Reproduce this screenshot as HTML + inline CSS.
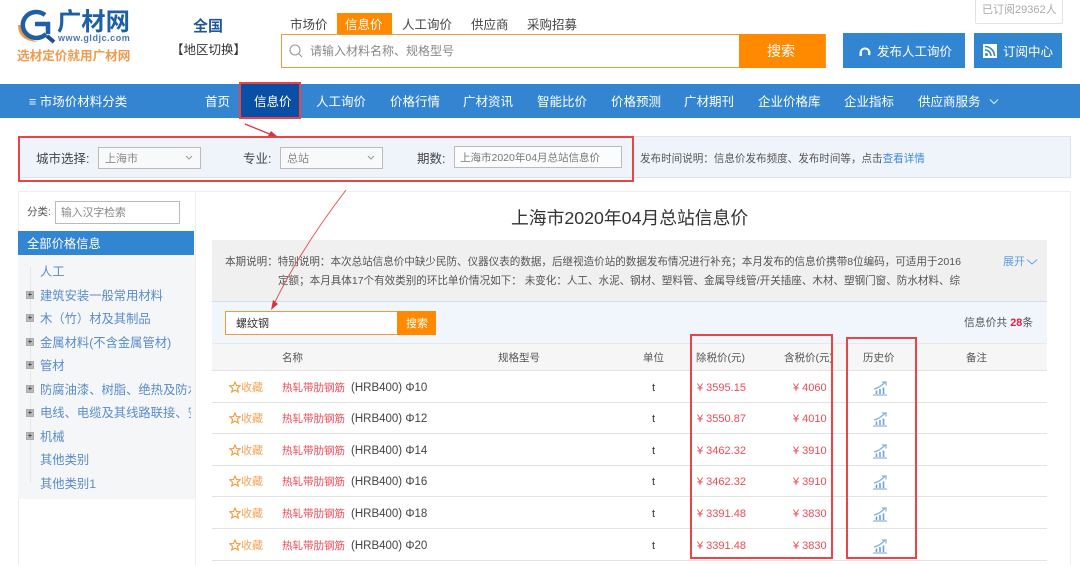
<!DOCTYPE html>
<html lang="zh"><head><meta charset="utf-8"><title>广材网</title>
<style>
*{box-sizing:border-box;margin:0;padding:0}
html,body{width:1080px;height:565px;overflow:hidden;background:#fff}
body{font-family:"Liberation Sans","Noto Sans CJK SC",sans-serif;font-size:12px;color:#444}
#w{position:absolute;left:0;top:0;width:1080px;height:565px;overflow:hidden;filter:blur(.35px)}
.a{position:absolute}
.t{position:absolute;white-space:nowrap;line-height:20px;height:20px}
.n{color:#fff;font-size:12.5px;top:92px}
.s{font-size:12.5px;color:#444;top:15px}
.r{border:2px solid #ea4448;position:absolute}
.side{color:#5a8ccb;font-size:12.3px;left:40px}
.pl{position:absolute;left:26px;width:8px;height:8px;background:#bbb;border:1px solid #aaa;color:#222;font-size:8px;line-height:6px;text-align:center}
.fav{color:#f5a55a;font-size:11px;left:241px}
.nm{color:#ee4a55;font-size:10.5px;left:282px}
.sp{color:#444;font-size:11.5px;left:351px}
.u{color:#333;font-size:11px;left:652px}
.p1{color:#ee4a55;font-size:11px;left:697px}
.p2{color:#ee4a55;font-size:11px;left:793px}
.ln{position:absolute;left:212px;width:835px;height:1px;background:#e3e3e3}
.h{font-size:10.5px;top:348px;color:#555}
</style></head><body><div id="w">

<!-- logo -->
<svg class="a" style="left:16px;top:8px" width="42" height="40" viewBox="0 0 42 40">
<path d="M2 17 Q2 33 22 34 Q9 30 6 17 Z" fill="#f09a3e"/>
<path d="M29 7 A13.5 13 0 1 0 30 26" fill="none" stroke="#1f5fa8" stroke-width="4.5"/>
<path d="M19 16 H32 V26" fill="none" stroke="#1f5fa8" stroke-width="4.5"/>
<path d="M31 28 L38 34" stroke="#1a4f90" stroke-width="4"/>
</svg>
<span class="t" style="left:57px;top:9px;font-size:24.3px;line-height:28px;height:28px;font-weight:bold;color:#1f5fa8">广材网</span>
<span class="t" style="left:58px;top:28px;font-size:9px;font-weight:bold;color:#4a78b0;letter-spacing:.55px">www.gldjc.com</span>
<span class="t" style="left:17px;top:46px;font-size:12.6px;color:#ef9a4f;font-weight:bold">选材定价就用广材网</span>
<span class="t" style="left:193px;top:17px;font-size:15px;font-weight:bold;color:#20579a">全国</span>
<span class="t" style="left:171px;top:40px;font-size:12.5px;color:#333">【地区切换】</span>

<!-- search tabs -->
<span class="t s" style="left:290px">市场价</span>
<div class="a" style="left:337px;top:13px;width:55px;height:21px;background:#ff8a00"></div>
<span class="t s" style="left:345px;color:#fff">信息价</span>
<span class="t s" style="left:402px">人工询价</span>
<span class="t s" style="left:471px">供应商</span>
<span class="t s" style="left:527px">采购招募</span>
<div class="a" style="left:281px;top:34px;width:545px;height:34px;border:1px solid #f59a3c;background:#fff"></div>
<svg class="a" style="left:288px;top:43px" width="16" height="16" viewBox="0 0 16 16"><circle cx="7" cy="7" r="5" fill="none" stroke="#999" stroke-width="1.1"/><path d="M11 11 L14 14" stroke="#999" stroke-width="1.1"/></svg>
<span class="t" style="left:310px;top:41px;color:#888;font-size:12px">请输入材料名称、规格型号</span>
<div class="a" style="left:739px;top:34px;width:86px;height:34px;background:#ff8a00"></div>
<span class="t" style="left:767px;top:41px;color:#fff;font-size:14px">搜索</span>

<!-- right top -->
<div class="a" style="left:975px;top:-4px;width:88px;height:28px;border:1px solid #e2e2e2;border-radius:2px;background:#fff"></div>
<span class="t" style="left:982px;top:0;color:#aaa;font-size:11px">已订阅29362人</span>
<div class="a" style="left:843px;top:33px;width:122px;height:35px;background:#3285d0"></div>
<svg class="a" style="left:858px;top:46px" width="14" height="13" viewBox="0 0 14 13"><path d="M3 9 A4.5 4.5 0 1 1 11 9" fill="none" stroke="#fff" stroke-width="2"/><rect x="1.5" y="6" width="2.5" height="4" fill="#fff"/><rect x="10" y="6" width="2" height="3" fill="#fff"/></svg>
<span class="t" style="left:877px;top:42px;color:#fff;font-size:12.5px">发布人工询价</span>
<div class="a" style="left:974px;top:33px;width:88px;height:35px;background:#3285d0"></div>
<svg class="a" style="left:983px;top:44px" width="14" height="14" viewBox="0 0 14 14"><rect width="14" height="14" fill="#fff"/><circle cx="3.5" cy="10.5" r="1.5" fill="#3285d0"/><path d="M2 6 A6 6 0 0 1 8 12 M2 2.5 A9.5 9.5 0 0 1 11.5 12" fill="none" stroke="#3285d0" stroke-width="1.6"/></svg>
<span class="t" style="left:1003px;top:42px;color:#fff;font-size:12.5px">订阅中心</span>

<!-- nav -->
<div class="a" style="left:0;top:84px;width:1080px;height:34px;background:#3385d2"></div>
<div class="a" style="left:241px;top:84px;width:60px;height:34px;background:#0a4fa6"></div>
<span class="t n" style="left:29px">≡ 市场价材料分类</span>
<span class="t n" style="left:205px">首页</span>
<span class="t n" style="left:254px">信息价</span>
<span class="t n" style="left:316px">人工询价</span>
<span class="t n" style="left:390px">价格行情</span>
<span class="t n" style="left:463px">广材资讯</span>
<span class="t n" style="left:537px">智能比价</span>
<span class="t n" style="left:611px">价格预测</span>
<span class="t n" style="left:684px">广材期刊</span>
<span class="t n" style="left:758px">企业价格库</span>
<span class="t n" style="left:844px">企业指标</span>
<span class="t n" style="left:918px">供应商服务</span>
<svg class="a" style="left:988px;top:98px" width="12" height="8" viewBox="0 0 12 8"><path d="M2 1.5 L6 5.5 L10 1.5" fill="none" stroke="#cfe3f6" stroke-width="1.2"/></svg>
<div class="r" style="left:239px;top:82px;width:62px;height:37px"></div>

<!-- filter -->
<div class="a" style="left:18px;top:136px;width:1053px;height:42px;background:#eff4fb;border:1px solid #dbe4f0"></div>
<span class="t" style="left:36px;top:149px;font-size:12.5px;color:#444">城市选择:</span>
<div class="a" style="left:98px;top:147px;width:103px;height:22px;border:1px solid #bbb;background:#f8f9fb"></div>
<span class="t" style="left:105px;top:149px;font-size:11px;color:#888">上海市</span>
<svg class="a" style="left:185px;top:155px" width="8" height="6" viewBox="0 0 8 6"><path d="M1 1 L4 4 L7 1" fill="none" stroke="#999"/></svg>
<span class="t" style="left:243px;top:149px;font-size:12.5px;color:#444">专业:</span>
<div class="a" style="left:280px;top:147px;width:103px;height:22px;border:1px solid #bbb;background:#f8f9fb"></div>
<span class="t" style="left:287px;top:149px;font-size:11px;color:#888">总站</span>
<svg class="a" style="left:367px;top:155px" width="8" height="6" viewBox="0 0 8 6"><path d="M1 1 L4 4 L7 1" fill="none" stroke="#999"/></svg>
<span class="t" style="left:417px;top:149px;font-size:12.5px;color:#444">期数:</span>
<div class="a" style="left:454px;top:146px;width:168px;height:22px;border:1px solid #bbb;background:#fbfcfd"></div>
<span class="t" style="left:460px;top:148px;font-size:10.5px;color:#777">上海市2020年04月总站信息价</span>
<span class="t" style="left:640px;top:149px;font-size:10.55px;color:#555">发布时间说明：信息价发布频度、发布时间等，点击<span style="color:#3d8ad8">查看详情</span></span>
<div class="r" style="left:18px;top:136px;width:616px;height:46px"></div>

<!-- panels -->
<div class="a" style="left:18px;top:191px;width:1053px;height:1px;background:#eee"></div>
<div class="a" style="left:18px;top:191px;width:1px;height:374px;background:#eee"></div>
<div class="a" style="left:195px;top:191px;width:1px;height:374px;background:#eee"></div>
<div class="a" style="left:1070px;top:191px;width:1px;height:374px;background:#eee"></div>

<!-- sidebar -->
<span class="t" style="left:27px;top:202px;font-size:10.5px;color:#555">分类:</span>
<div class="a" style="left:55px;top:201px;width:125px;height:23px;border:1px solid #bbb"></div>
<span class="t" style="left:61px;top:203px;font-size:10.8px;color:#888">输入汉字检索</span>
<div class="a" style="left:18px;top:254px;width:177px;height:245px;background:#f5f6f8"></div>
<div class="a" style="left:18px;top:231px;width:176px;height:24px;background:#3285d0"></div>
<span class="t" style="left:27px;top:234px;color:#fff;font-size:12.3px">全部价格信息</span>
<div class="a" style="left:30px;top:267px;width:1px;height:216px;background:#e6e6e6"></div>
<span class="t side" style="top:262px">人工</span>
<span class="t side" style="top:286px">建筑安装一般常用材料</span>
<span class="t side" style="top:309px">木（竹）材及其制品</span>
<span class="t side" style="top:333px">金属材料(不含金属管材)</span>
<span class="t side" style="top:356px">管材</span>
<span class="t side" style="top:380px;width:151px;overflow:hidden">防腐油漆、树脂、绝热及防水</span>
<span class="t side" style="top:403px;width:151px;overflow:hidden">电线、电缆及其线路联接、安</span>
<span class="t side" style="top:427px">机械</span>
<span class="t side" style="top:450px">其他类别</span>
<span class="t side" style="top:474px">其他类别1</span>
<div class="pl" style="top:291px">+</div><div class="pl" style="top:314px">+</div><div class="pl" style="top:338px">+</div><div class="pl" style="top:361px">+</div><div class="pl" style="top:385px">+</div><div class="pl" style="top:409px">+</div><div class="pl" style="top:432px">+</div>

<!-- main -->
<span class="t" style="left:511px;top:207px;font-size:17.8px;line-height:22px;height:22px;color:#333">上海市2020年04月总站信息价</span>
<div class="a" style="left:212px;top:240px;width:835px;height:62px;background:#f0f0f0"></div>
<span class="t" style="left:225px;top:252px;font-size:10.56px;color:#555">本期说明：特别说明：本次总站信息价中缺少民防、仪器仪表的数据，后继视造价站的数据发布情况进行补充；本月发布的信息价携带8位编码，可适用于2016</span>
<span class="t" style="left:278px;top:271px;font-size:10.56px;color:#555">定额；本月具体17个有效类别的环比单价情况如下： 未变化：人工、水泥、钢材、塑料管、金属导线管/开关插座、木材、塑钢门窗、防水材料、综</span>
<span class="t" style="left:1003px;top:252px;font-size:11px;color:#5b9ee0">展开</span>
<svg class="a" style="left:1026px;top:258px" width="12" height="8" viewBox="0 0 12 8"><path d="M1 1.5 L6 6 L11 1.5" fill="none" stroke="#6aa8e4" stroke-width="1.1"/></svg>
<div class="a" style="left:212px;top:301px;width:835px;height:1px;background:#d4deea"></div>
<div class="a" style="left:212px;top:302px;width:835px;height:41px;background:#f1f6fd"></div>
<div class="a" style="left:225px;top:311px;width:173px;height:24px;background:#fff;border:1px solid #f59a3c"></div>
<span class="t" style="left:236px;top:314px;font-size:11px;color:#333">螺纹钢</span>
<div class="a" style="left:397px;top:311px;width:39px;height:24px;background:#ff8a00"></div>
<span class="t" style="left:406px;top:314px;font-size:11px;color:#fff">搜索</span>
<span class="t" style="left:964px;top:313px;font-size:10.8px;color:#555">信息价共 <b style="color:#e0203a">28</b>条</span>

<div class="a" style="left:212px;top:343px;width:835px;height:28px;background:#f6f6f6;border-top:1px solid #e8e8e8;border-bottom:1px solid #e3e3e3"></div>
<span class="t h" style="left:282px">名称</span>
<span class="t h" style="left:498px">规格型号</span>
<span class="t h" style="left:643px">单位</span>
<span class="t h" style="left:696px">除税价(元)</span>
<span class="t h" style="left:784px">含税价(元)</span>
<span class="t h" style="left:863px">历史价</span>
<span class="t h" style="left:966px">备注</span>

<!-- rows -->
<svg width="0" height="0" style="position:absolute"><defs>
<g id="c"><path d="M1 8 Q6 7 12 1.5" fill="none" stroke="#7fb0de" stroke-width="1.2"/><path d="M9 1 H13 V4.5" fill="none" stroke="#7fb0de" stroke-width="1.2"/><path d="M3.5 9.5 V13 M7 8 V13 M10.5 6.5 V13" stroke="#6fa3d8" stroke-width="1.6"/><path d="M0 14 H14" stroke="#6fa3d8" stroke-width="1"/></g>
<path id="st" d="M6 1 L7.5 4.5 L11.3 4.8 L8.4 7.3 L9.3 11 L6 9 L2.7 11 L3.6 7.3 L.7 4.8 L4.5 4.5 Z" fill="none" stroke="#f29a35" stroke-width="1.1"/>
</defs></svg>

<svg class="a" style="left:229px;top:381px" width="12" height="12"><use href="#st"/></svg><span class="t fav" style="top:378px">收藏</span><span class="t nm" style="top:378px">热轧带肋钢筋</span><span class="t sp" style="top:378px">(HRB400) Φ10</span><span class="t u" style="top:378px">t</span><span class="t p1" style="top:378px">¥ 3595.15</span><span class="t p2" style="top:378px">¥ 4060</span>
<svg class="a" style="left:229px;top:412px" width="12" height="12"><use href="#st"/></svg><span class="t fav" style="top:409px">收藏</span><span class="t nm" style="top:409px">热轧带肋钢筋</span><span class="t sp" style="top:409px">(HRB400) Φ12</span><span class="t u" style="top:409px">t</span><span class="t p1" style="top:409px">¥ 3550.87</span><span class="t p2" style="top:409px">¥ 4010</span>
<svg class="a" style="left:229px;top:444px" width="12" height="12"><use href="#st"/></svg><span class="t fav" style="top:441px">收藏</span><span class="t nm" style="top:441px">热轧带肋钢筋</span><span class="t sp" style="top:441px">(HRB400) Φ14</span><span class="t u" style="top:441px">t</span><span class="t p1" style="top:441px">¥ 3462.32</span><span class="t p2" style="top:441px">¥ 3910</span>
<svg class="a" style="left:229px;top:475px" width="12" height="12"><use href="#st"/></svg><span class="t fav" style="top:472px">收藏</span><span class="t nm" style="top:472px">热轧带肋钢筋</span><span class="t sp" style="top:472px">(HRB400) Φ16</span><span class="t u" style="top:472px">t</span><span class="t p1" style="top:472px">¥ 3462.32</span><span class="t p2" style="top:472px">¥ 3910</span>
<svg class="a" style="left:229px;top:507px" width="12" height="12"><use href="#st"/></svg><span class="t fav" style="top:504px">收藏</span><span class="t nm" style="top:504px">热轧带肋钢筋</span><span class="t sp" style="top:504px">(HRB400) Φ18</span><span class="t u" style="top:504px">t</span><span class="t p1" style="top:504px">¥ 3391.48</span><span class="t p2" style="top:504px">¥ 3830</span>
<svg class="a" style="left:229px;top:539px" width="12" height="12"><use href="#st"/></svg><span class="t fav" style="top:536px">收藏</span><span class="t nm" style="top:536px">热轧带肋钢筋</span><span class="t sp" style="top:536px">(HRB400) Φ20</span><span class="t u" style="top:536px">t</span><span class="t p1" style="top:536px">¥ 3391.48</span><span class="t p2" style="top:536px">¥ 3830</span>
<div class="ln" style="top:402px"></div><div class="ln" style="top:433px"></div><div class="ln" style="top:465px"></div><div class="ln" style="top:496px"></div><div class="ln" style="top:528px"></div><div class="ln" style="top:560px"></div>

<svg class="a" style="left:873px;top:381px" width="15" height="15"><use href="#c"/></svg>
<svg class="a" style="left:873px;top:412px" width="15" height="15"><use href="#c"/></svg>
<svg class="a" style="left:873px;top:444px" width="15" height="15"><use href="#c"/></svg>
<svg class="a" style="left:873px;top:475px" width="15" height="15"><use href="#c"/></svg>
<svg class="a" style="left:873px;top:507px" width="15" height="15"><use href="#c"/></svg>
<svg class="a" style="left:873px;top:539px" width="15" height="15"><use href="#c"/></svg>

<!-- red annotations -->
<div class="r" style="left:690px;top:334px;width:143px;height:225px"></div>
<div class="r" style="left:846px;top:337px;width:71px;height:222px"></div>
<svg class="a" style="left:0;top:0" width="1080" height="565" viewBox="0 0 1080 565">
<path d="M245 124 L272 135" stroke="#d8343a" stroke-width="1.3"/><path d="M278 137 L268 136 L271 131 Z" fill="#d8343a"/>
<path d="M346 190 Q300 250 273 306" stroke="#e2555a" stroke-width="1" fill="none"/><path d="M271 310 L273 300 L278 304 Z" fill="#d8343a"/>
</svg>
</div></body></html>
